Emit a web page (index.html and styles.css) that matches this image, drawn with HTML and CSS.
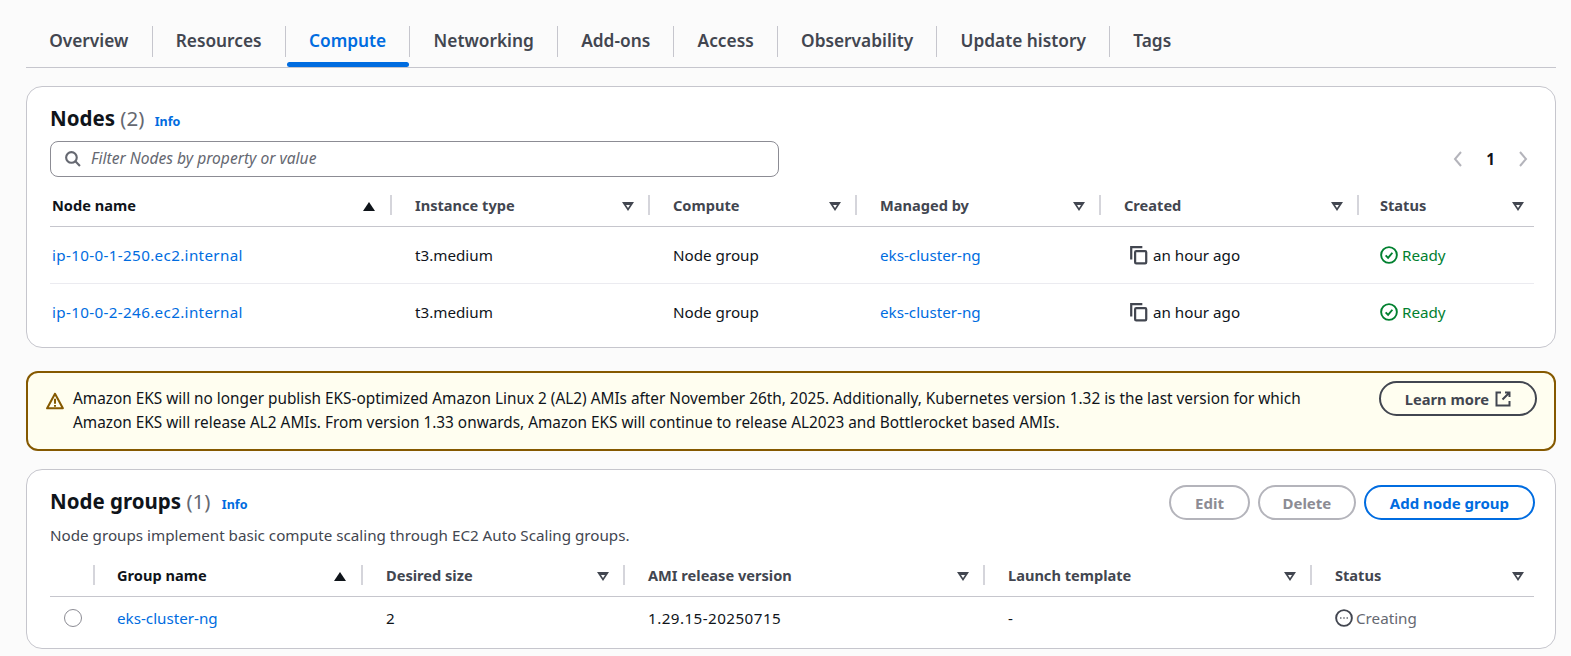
FILE: index.html
```html
<!DOCTYPE html>
<html lang="en">
<head>
    <meta charset="UTF-8">
    <meta name="viewport" content="width=device-width, initial-scale=1.0">
    <title>EKS cluster - Compute</title>
    <link rel="stylesheet" href="styles.css">
</head>
<body>

    <!-- Tabs -->
    <nav class="tabs">
        <a class="tab">Overview</a>
        <a class="tab">Resources</a>
        <a class="tab tab-active">Compute</a>
        <a class="tab">Networking</a>
        <a class="tab">Add-ons</a>
        <a class="tab">Access</a>
        <a class="tab">Observability</a>
        <a class="tab">Update history</a>
        <a class="tab">Tags</a>
    </nav>

    <!-- Nodes -->
    <section class="card card-nodes">
        <h2 class="card-title">Nodes <span class="count">(2)</span> <a class="info">Info</a></h2>
        <div class="filter-row">
            <div class="filter">
                <svg class="icon-search" viewBox="0 0 16 16"><circle cx="7" cy="7" r="5"/><path d="M10.7 10.7 15 15"/></svg>
                <span>Filter Nodes by property or value</span>
            </div>
            <div class="pager">
                <svg viewBox="0 0 16 16"><path d="M11 1 5 8l6 7"/></svg>
                <span class="page-num">1</span>
                <svg viewBox="0 0 16 16"><path d="m5 1 6 7-6 7"/></svg>
            </div>
        </div>
        <table class="grid">
            <colgroup>
                <col style="width: 342px"><col style="width: 258px"><col style="width: 207px">
                <col style="width: 244px"><col style="width: 258px"><col style="width: 175px">
            </colgroup>
            <thead>
                <tr>
                    <th class="first"><div class="th-in active">Node name <i class="sort sort-up"></i></div></th>
                    <th><div class="th-in">Instance type <i class="sort"></i></div></th>
                    <th><div class="th-in">Compute <i class="sort"></i></div></th>
                    <th><div class="th-in">Managed by <i class="sort"></i></div></th>
                    <th><div class="th-in">Created <i class="sort"></i></div></th>
                    <th class="last"><div class="th-in">Status <i class="sort"></i></div></th>
                </tr>
            </thead>
            <tbody>
                <tr>
                    <td class="first"><a class="link link-ip">ip-10-0-1-250.ec2.internal</a></td>
                    <td>t3.medium</td>
                    <td>Node group</td>
                    <td><a class="link">eks-cluster-ng</a></td>
                    <td><span class="created"><svg class="icon-copy" viewBox="0 0 18 18"><path d="M2 13V2h10"/><rect x="5.5" y="5.5" width="10" height="11" rx="1"/></svg>an hour ago</span></td>
                    <td class="last"><span class="status ready"><svg viewBox="0 0 16 16"><circle cx="8" cy="8" r="7"/><path d="m5 8.3 2.2 2.2L11 6"/></svg>Ready</span></td>
                </tr>
                <tr>
                    <td class="first"><a class="link link-ip">ip-10-0-2-246.ec2.internal</a></td>
                    <td>t3.medium</td>
                    <td>Node group</td>
                    <td><a class="link">eks-cluster-ng</a></td>
                    <td><span class="created"><svg class="icon-copy" viewBox="0 0 18 18"><path d="M2 13V2h10"/><rect x="5.5" y="5.5" width="10" height="11" rx="1"/></svg>an hour ago</span></td>
                    <td class="last"><span class="status ready"><svg viewBox="0 0 16 16"><circle cx="8" cy="8" r="7"/><path d="m5 8.3 2.2 2.2L11 6"/></svg>Ready</span></td>
                </tr>
            </tbody>
        </table>
    </section>

    <!-- Warning -->
    <div class="alert">
        <svg class="icon-warn" viewBox="0 0 16 16"><path d="M8 1.5 1 14.5h14z"/><path d="M8 6v4.5M8 11.5v1.5"/></svg>
        <p>Amazon EKS will no longer publish EKS-optimized Amazon Linux 2 (AL2) AMIs after November 26th, 2025. Additionally, Kubernetes version 1.32 is the last version for which Amazon EKS will release AL2 AMIs. From version 1.33 onwards, Amazon EKS will continue to release AL2023 and Bottlerocket based AMIs.</p>
        <button class="btn btn-dark">Learn more
            <svg viewBox="0 0 16 16"><path d="M6 1.5H1.5v13h13V10M10 1.5h4.500V6M14 2 7.500 8.500"/></svg>
        </button>
    </div>

    <!-- Node groups -->
    <section class="card card-groups">
        <div class="card-head">
            <div>
                <h2 class="card-title">Node groups <span class="count">(1)</span> <a class="info">Info</a></h2>
                <p class="desc">Node groups implement basic compute scaling through EC2 Auto Scaling groups.</p>
            </div>
            <div class="actions">
                <button class="btn btn-off">Edit</button>
                <button class="btn btn-off btn-delete">Delete</button>
                <button class="btn btn-blue">Add node group</button>
            </div>
        </div>
        <table class="grid">
            <colgroup>
                <col style="width: 45px"><col style="width: 268px"><col style="width: 262px">
                <col style="width: 360px"><col style="width: 327px"><col style="width: 222px">
            </colgroup>
            <thead>
                <tr>
                    <th><div class="th-in"></div></th>
                    <th class="col-name"><div class="th-in active">Group name <i class="sort sort-up"></i></div></th>
                    <th><div class="th-in">Desired size <i class="sort"></i></div></th>
                    <th><div class="th-in">AMI release version <i class="sort"></i></div></th>
                    <th><div class="th-in">Launch template <i class="sort"></i></div></th>
                    <th class="last"><div class="th-in">Status <i class="sort"></i></div></th>
                </tr>
            </thead>
            <tbody>
                <tr>
                    <td class="radio-cell"><span class="radio"></span></td>
                    <td class="col-name"><a class="link">eks-cluster-ng</a></td>
                    <td>2</td>
                    <td class="version">1.29.15-20250715</td>
                    <td>-</td>
                    <td><span class="status creating"><svg viewBox="0 0 16 16"><circle cx="8" cy="8" r="7"/><path d="M4.800 8h.8M7.600 8h.8M10.400 8h.8"/></svg>Creating</span></td>
                </tr>
            </tbody>
        </table>
    </section>

</body>
</html>
```

FILE: styles.css
```css
/* Global Styles */
* {
    box-sizing: border-box;
}

body {
    font-family: "Noto Sans", "Open Sans", sans-serif;
    font-size: 15.2px;
    margin: 0;
    padding: 26px 15px 0 26px;
    background: #fbfbfb;
    color: #0f141a;
}

/* Tabs */
.tabs {
    display: flex;
    height: 42px;
    border-bottom: 1px solid #c6c6cd;
}

.tab {
    position: relative;
    height: 31px;
    padding: 0 23.200px;
    border-right: 1px solid #c6c6cd;
    font-size: 17.300px;
    font-weight: 600;
    line-height: 30px;
    color: #424650;
}

.tab:last-child {
    border-right: none;
}

.tab-active {
    color: #006ce0;
}

.tab-active::after {
    content: "";
    position: absolute;
    left: 1px;
    right: 0;
    bottom: -10px;
    height: 5px;
    background: #006ce0;
    border-radius: 3px;
}

/* Cards */
.card {
    background: #fff;
    border: 1px solid #c6c6cd;
    border-radius: 16px;
    padding: 0 19px 0 23px;
}

.card-nodes {
    height: 262px;
    margin-top: 18px;
    padding-top: 17px;
}

.card-groups {
    height: 180px;
    margin-top: 18px;
    padding-top: 17px;
}

.card-title {
    margin: 0;
    font-size: 20.500px;
    font-weight: 700;
    line-height: 28px;
}

.count {
    font-weight: 400;
    color: #656871;
}

.info {
    margin-left: 5px;
    font-size: 12.500px;
    font-weight: 700;
    color: #006ce0;
}

.card-groups .info {
    margin-left: 6px;
}

.desc {
    margin: 6px 0 0;
    line-height: 20px;
    color: #424650;
}

.card-head {
    display: flex;
    justify-content: space-between;
    height: 69px;
    padding-right: 1px;
}

.actions {
    display: flex;
    gap: 8px;
    margin-top: -2px;
}

/* Filter */
.filter-row {
    display: flex;
    justify-content: space-between;
    align-items: center;
    margin-top: 5px;
}

.filter {
    display: flex;
    align-items: center;
    gap: 10px;
    width: 729px;
    height: 36px;
    padding: 0 0 2px 13px;
    border: 1px solid #8c8c94;
    border-radius: 8px;
    font-size: 15.600px;
    font-style: italic;
    color: #656871;
}

.icon-search {
    width: 17px;
    height: 17px;
    fill: none;
    stroke: #656871;
    stroke-width: 2;
}

.pager {
    display: flex;
    align-items: center;
    gap: 20px;
    padding-right: 5px;
}

.pager svg {
    width: 16px;
    height: 16px;
    fill: none;
    stroke: #b4b4bb;
    stroke-width: 2;
}

.page-num {
    font-weight: 700;
}

/* Tables */
.grid {
    width: 1484px;
    table-layout: fixed;
    border-collapse: collapse;
}

.card-nodes .grid {
    margin-top: 9px;
}

.grid th {
    height: 40px;
    padding: 0 0 2px;
    text-align: left;
    font-size: 14.600px;
    font-weight: 700;
    border-bottom: 1px solid #c6c6cd;
    color: #424650;
}

.th-in {
    display: flex;
    justify-content: space-between;
    align-items: center;
    height: 20px;
    padding: 0 14px 0 23px;
    border-right: 2px solid #d5d5db;
}

.grid th.first .th-in {
    padding-left: 2px;
}

.grid th.col-name .th-in {
    padding-left: 22px;
}

.card-nodes th.last .th-in {
    padding-left: 21px;
}

.grid th.last .th-in {
    border-right: none;
    padding-right: 10px;
}

.th-in.active {
    color: #0f141a;
}

/* Sort triangles */
.sort {
    position: relative;
    top: 2px;
    width: 0;
    height: 0;
    border: 6px solid transparent;
    border-top: 9px solid #424650;
    border-bottom: none;
}

.sort::after {
    content: "";
    position: absolute;
    left: -2px;
    top: -6.500px;
    border: 2px solid transparent;
    border-top: 3px solid #fff;
    border-bottom: none;
}

.sort-up {
    border-top: none;
    border-bottom: 9px solid #0f141a;
    margin-right: 1px;
}

.sort-up::after {
    display: none;
}

.grid td {
    padding: 0 0 0 23px;
    border-bottom: 1px solid #ebebf0;
}

.card-nodes td {
    height: 57px;
}

.card-groups td {
    height: 43px;
}

.grid tbody tr:last-child td {
    border-bottom: none;
}

.grid td.first {
    padding-left: 2px;
}

.grid td.col-name {
    padding-left: 22px;
}

.card-nodes td.last {
    padding-left: 21px;
}

.link {
    color: #006ce0;
}

.link-ip {
    letter-spacing: 0.35px;
}

.version {
    letter-spacing: 0.45px;
}

.created {
    display: flex;
    align-items: center;
    gap: 4px;
    padding-left: 5px;
}

.icon-copy {
    width: 20px;
    height: 20px;
    fill: none;
    stroke: #424650;
    stroke-width: 2;
}

.status {
    display: flex;
    align-items: center;
    gap: 4px;
}

.status svg {
    width: 18px;
    height: 18px;
    fill: none;
    stroke-width: 1.700;
}

.ready {
    color: #00802f;
}

.ready svg {
    stroke: #00802f;
}

.creating {
    color: #656871;
    gap: 3px;
}

.creating svg {
    stroke: #424650;
}

.radio-cell.radio-cell {
    padding-left: 14px;
}

.radio {
    display: block;
    width: 18px;
    height: 18px;
    border: 1px solid #8c8c94;
    border-radius: 50%;
}

/* Buttons */
.btn {
    height: 35px;
    padding: 0 24px;
    background: transparent;
    border: 2px solid;
    border-radius: 20px;
    font-family: inherit;
    font-size: 15px;
    font-weight: 700;
    white-space: nowrap;
}

.btn-delete {
    padding: 0 22.500px;
}

.btn-blue {
    color: #006ce0;
    border-color: #006ce0;
}

.btn-off {
    color: #8c8c94;
    border-color: #b4b4bb;
}

.btn-dark {
    display: flex;
    align-items: center;
    gap: 6px;
    flex-shrink: 0;
    font-size: 14.700px;
    color: #424650;
    border-color: #424650;
}

.btn-dark svg {
    width: 16px;
    height: 16px;
    fill: none;
    stroke: #424650;
    stroke-width: 2;
}

/* Alert */
.alert {
    display: flex;
    align-items: flex-start;
    height: 80px;
    margin-top: 23px;
    padding: 8px 17px 0 18px;
    background: #fffef0;
    border: 2px solid #855900;
    border-radius: 12px;
}

.alert p {
    width: 1255px;
    margin: 5px 0 0 9px;
    font-size: 15.350px;
    line-height: 24px;
    flex-shrink: 0;
}

.alert .btn {
    margin-left: auto;
}

.icon-warn {
    flex-shrink: 0;
    width: 18px;
    height: 18px;
    margin-top: 11px;
    fill: none;
    stroke: #855900;
    stroke-width: 1.800;
    stroke-linejoin: round;
}
```
